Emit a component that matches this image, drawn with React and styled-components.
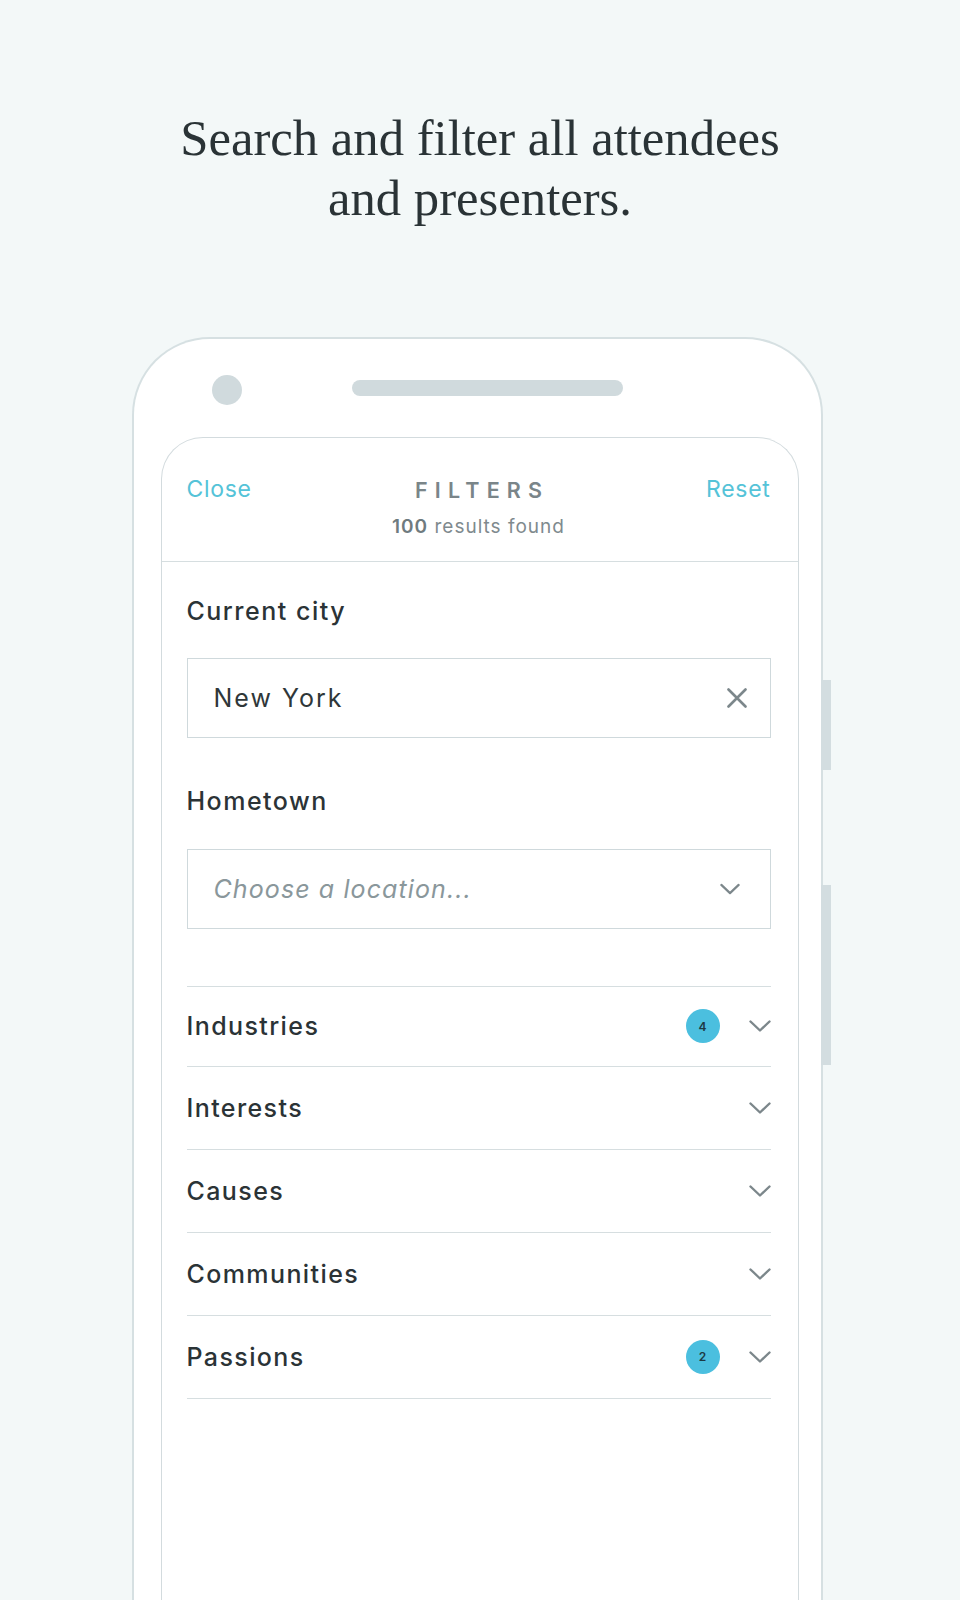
import React from "react";
import styled, { createGlobalStyle } from "styled-components";

const Global = createGlobalStyle`
  html, body {
    margin: 0;
    padding: 0;
    background: #f3f8f8;
    overflow: hidden;
  }
`;

const Page = styled.div`
  height: 1600px;
  overflow: hidden;
  background: #f3f8f8;
`;

const Heading = styled.h1`
  margin: 0;
  padding-top: 108px;
  font-family: "Liberation Serif", "Times New Roman", serif;
  font-weight: 400;
  font-size: 50.7px;
  line-height: 60px;
  color: #2a3336;
  text-align: center;
`;

const Phone = styled.div`
  position: relative;
  width: 691px;
  box-sizing: border-box;
  margin: 109px 0 0 132px;
  background: #fff;
  border: 2.5px solid #d6e0e2;
  border-bottom: none;
  border-radius: 78px 78px 0 0;
  padding: 0 22.5px 0 26.5px;
`;

const SideButton = styled.div`
  position: absolute;
  right: -10px;
  width: 10px;
  top: ${(p) => p.$top}px;
  height: ${(p) => p.$h}px;
  background: #d3dde0;
`;

const TopBar = styled.div`
  height: 97.5px;
  display: flex;
  align-items: center;
  padding-left: 51px;
`;

const Camera = styled.div`
  width: 30px;
  height: 30px;
  margin-top: 4px;
  border-radius: 50%;
  background: #d0dadd;
`;

const Speaker = styled.div`
  margin-left: 110px;
  width: 271px;
  height: 16px;
  border-radius: 8px;
  background: #d0dadd;
`;

const Screen = styled.div`
  border: 1.5px solid #d3dbde;
  border-bottom: none;
  border-radius: 42px 42px 0 0;
  background: #fff;
  font-family: Inter, "Noto Sans", sans-serif;
`;

const Header = styled.div`
  height: 124px;
  box-sizing: border-box;
  border-bottom: 1.5px solid #d6dee0;
  display: grid;
  grid-template-columns: 1fr auto 1fr;
  align-items: start;
  padding: 37px 27px 0 25px;
`;

const HeaderLink = styled.div`
  font-size: 23px;
  line-height: 28px;
  letter-spacing: 0.7px;
  color: #55c3d8;
  text-align: ${(p) => p.$align};
`;

const TitleBlock = styled.div`
  display: flex;
  flex-direction: column;
  align-items: center;
`;

const Title = styled.div`
  font-size: 21.5px;
  font-weight: 600;
  line-height: 30px;
  letter-spacing: 7.2px;
  margin-right: -7.2px;
  color: #7a8589;
`;

const Count = styled.div`
  margin-top: 11px;
  font-size: 19px;
  line-height: 22px;
  color: #7f8a8e;
  letter-spacing: 1px;

  b {
    font-weight: 600;
    color: #6f7b7f;
  }
`;

const Body = styled.div`
  height: 1008px;
  padding: 0 27px 0 25px;
`;

const Label = styled.div`
  margin-top: ${(p) => p.$mt}px;
  font-size: 25px;
  font-weight: 500;
  line-height: 28px;
  letter-spacing: 1.5px;
  color: #2b3336;
`;

const Field = styled.div`
  margin-top: ${(p) => p.$mt}px;
  height: 80px;
  box-sizing: border-box;
  border: 1.5px solid #cfd9dc;
  display: flex;
  align-items: center;
  justify-content: space-between;
  padding: 0 ${(p) => p.$pr}px 0 26px;
`;

const FieldText = styled.span`
  font-size: 25px;
  letter-spacing: ${(p) => (p.$placeholder ? 1.1 : 2)}px;
  color: ${(p) => (p.$placeholder ? "#8a979b" : "#2f3739")};
  font-style: ${(p) => (p.$placeholder ? "italic" : "normal")};
`;

const List = styled.div`
  margin-top: 57px;
  border-top: 1.5px solid #d6dee0;
`;

const Row = styled.div`
  height: ${(p) => p.$h}px;
  box-sizing: border-box;
  border-bottom: 1.5px solid #d6dee0;
  display: flex;
  align-items: center;
`;

const RowLabel = styled.div`
  flex: 1;
  font-size: 25px;
  font-weight: 500;
  letter-spacing: 1.4px;
  color: #2b3336;
`;

const Badge = styled.div`
  width: 34px;
  height: 34px;
  border-radius: 50%;
  background: #4bbfdf;
  color: #1d3a44;
  font-size: 12px;
  font-weight: 600;
  display: flex;
  align-items: center;
  justify-content: center;
  margin-right: 29px;
`;

const Footer = styled.div`
  height: 60px;
  border-top: 1.5px solid #d6dee0;
  background: #fbfcfc;
`;

function Chevron({ width = 22 }) {
  return (
    <svg width={width} height="12" viewBox="0 0 22 12" fill="none">
      <polyline points="1.5,1.5 11,10.5 20.5,1.5" stroke="#7c878b" strokeWidth="2.4" strokeLinecap="round" strokeLinejoin="round" />
    </svg>
  );
}

function Cross() {
  return (
    <svg width="20" height="20" viewBox="0 0 20 20" fill="none">
      <path d="M1.5 1.5 L18.5 18.5 M18.5 1.5 L1.5 18.5" stroke="#7c878b" strokeWidth="2.6" strokeLinecap="round" />
    </svg>
  );
}

const rows = [
  { name: "Industries", count: 4, h: 80 },
  { name: "Interests", h: 83 },
  { name: "Causes", h: 83 },
  { name: "Communities", h: 83 },
  { name: "Passions", count: 2, h: 83 },
];

export default function App() {
  return (
    <Page>
      <Global />
      <Heading>
        Search and filter all attendees
        <br />
        and presenters.
      </Heading>
      <Phone>
        <SideButton $top={341} $h={90} />
        <SideButton $top={546} $h={180} />
        <TopBar>
          <Camera />
          <Speaker />
        </TopBar>
        <Screen>
          <Header>
            <HeaderLink $align="left">Close</HeaderLink>
            <TitleBlock>
              <Title>FILTERS</Title>
              <Count>
                <b>100</b> results found
              </Count>
            </TitleBlock>
            <HeaderLink $align="right">Reset</HeaderLink>
          </Header>
          <Body>
            <Label $mt={35}>Current city</Label>
            <Field $mt={33} $pr={23}>
              <FieldText>New York</FieldText>
              <Cross />
            </Field>
            <Label $mt={49}>Hometown</Label>
            <Field $mt={34} $pr={30}>
              <FieldText $placeholder>Choose a location...</FieldText>
              <Chevron width={20} />
            </Field>
            <List>
              {rows.map((r) => (
                <Row key={r.name} $h={r.h}>
                  <RowLabel>{r.name}</RowLabel>
                  {r.count && <Badge>{r.count}</Badge>}
                  <Chevron />
                </Row>
              ))}
            </List>
          </Body>
          <Footer />
        </Screen>
      </Phone>
    </Page>
  );
}
